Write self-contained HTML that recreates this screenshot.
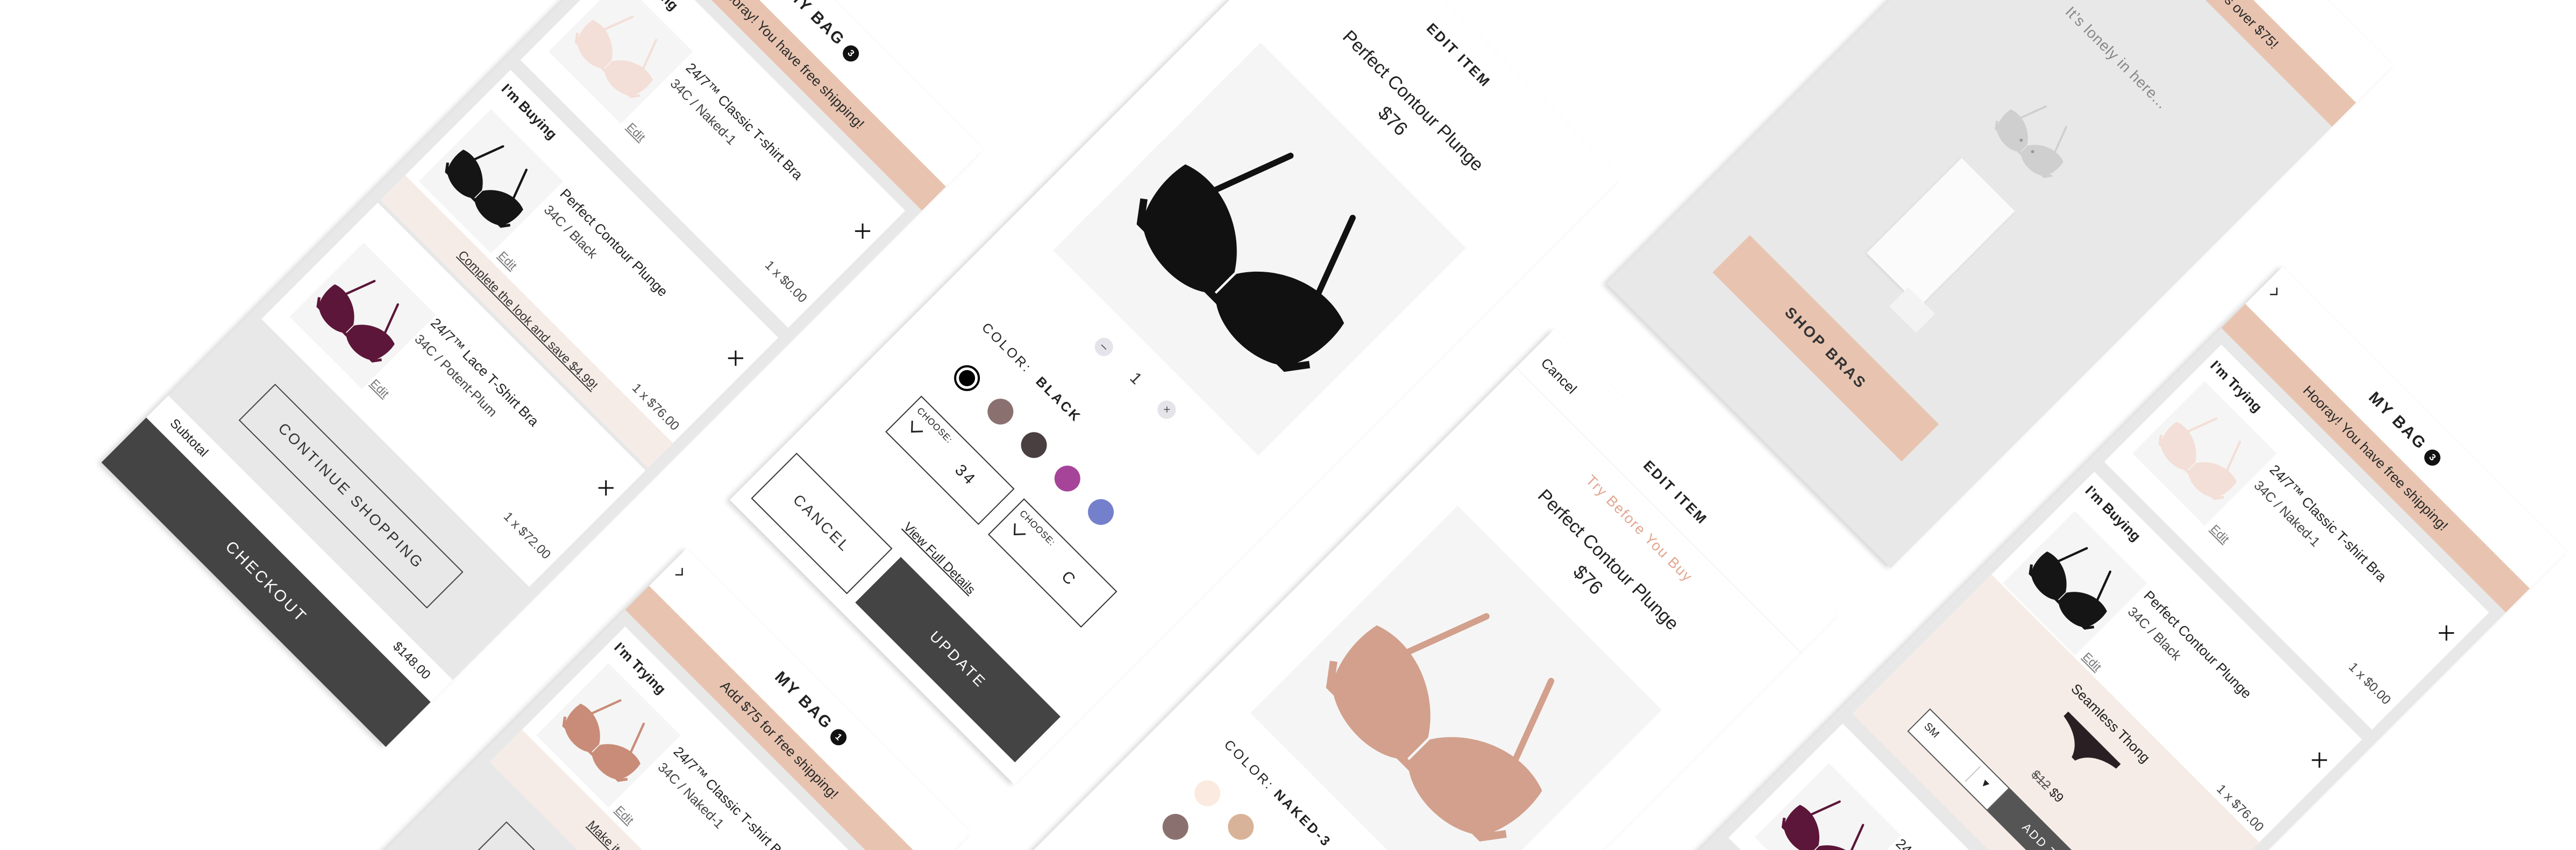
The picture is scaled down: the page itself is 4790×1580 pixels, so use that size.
<!DOCTYPE html>
<html><head><meta charset="utf-8">
<style>
html,body{margin:0;padding:0;width:4790px;height:1580px;overflow:hidden;}
body{background:#fff;font-family:"Liberation Sans",sans-serif;color:#222;}
#wrap{position:relative;width:4790px;height:1580px;overflow:hidden;contain:paint;}
.p{position:absolute;transform-origin:0 0;transform:rotate(45deg);box-shadow:-4px 6px 10px rgba(0,0,0,.16);overflow:hidden;}
.a{position:absolute;white-space:nowrap;}
.c{left:0;width:100%;text-align:center;}
.hd{font-weight:bold;font-size:30px;line-height:36px;letter-spacing:3px;}
.badge{display:inline-block;width:30px;height:30px;border-radius:50%;background:#111;color:#fff;font-size:17px;line-height:30px;text-align:center;letter-spacing:0;vertical-align:2px;margin-left:10px;}
.ban{background:#e8c4b0;font-size:26px;line-height:63px;text-align:center;color:#2a2a2a;}
.card{position:absolute;background:#fff;}
.sec{font-weight:bold;font-size:26px;line-height:30px;}
.t{font-size:26px;line-height:30px;color:#222;}
.s{font-size:25px;line-height:30px;color:#444;}
.e{font-size:22px;line-height:26px;color:#777;text-decoration:underline;}
.pr{font-size:24px;line-height:26px;color:#444;}
.im{position:absolute;background:#f5f5f5;}
.im svg{position:absolute;left:5%;top:10%;width:90%;height:80%;}
.x{position:absolute;width:26px;height:26px;}
.btn{position:absolute;text-align:center;letter-spacing:4px;font-size:28px;}
.sw{position:absolute;width:48px;height:48px;border-radius:50%;margin:-24px 0 0 -24px;}
</style></head><body>
<svg width="0" height="0" style="position:absolute">
<defs>
<symbol id="bra" viewBox="0 0 200 160">
<path d="M40,72 L64,8 M160,72 L136,8" stroke="currentColor" stroke-width="5" fill="none" stroke-linecap="round"/>
<path d="M8,74 C40,62 80,78 99,108 L99,132 C82,150 40,152 16,132 C6,114 4,92 8,74Z" fill="currentColor"/>
<path d="M192,74 C160,62 120,78 101,108 L101,132 C118,150 160,152 184,132 C194,114 196,92 192,74Z" fill="currentColor"/>
<path d="M4,118 L16,134 L184,134 L196,118" stroke="currentColor" stroke-width="6" fill="none"/>
</symbol>
<symbol id="thong" viewBox="0 0 200 100">
<path d="M8,18 L192,18 L192,34 C150,40 116,60 106,92 L94,92 C84,60 50,40 8,34Z" fill="currentColor"/>
</symbol>
<symbol id="xx" viewBox="0 0 26 26">
<path d="M3,3 L23,23 M23,3 L3,23" stroke="#111" stroke-width="3"/>
</symbol>
</defs></svg>
<div id="wrap">

<!-- Panel A -->
<div class="p" style="left:1300px;top:-252px;width:748px;height:1572px;background:#e8e8e8;">
 <div class="a" style="left:0;top:0;width:748px;height:99px;background:#fff"></div>
 <div class="a c hd" style="top:29px">MY BAG<span class="badge">3</span></div>
 <div class="a ban" style="left:0;top:99px;width:748px;height:63px">Hooray! You have free shipping!</div>
 <div class="card" style="left:22px;top:184px;width:704px;height:308px">
  <div class="a sec" style="left:13px;top:20px">I’m Trying</div>
  <div class="im" style="left:26px;top:70px;width:190px;height:190px"><svg style="color:#f3dfd7"><use href="#bra" width="100%" height="100%"/></svg></div>
  <div class="a t" style="left:228px;top:79px">24/7™ Classic T-shirt Bra</div>
  <div class="a s" style="left:228px;top:121px">34C / Naked-1</div>
  <div class="a e" style="left:228px;top:238px">Edit</div>
  <div class="a pr" style="right:14px;top:238px">1 x $0.00</div>
  <svg class="x" style="left:662px;top:70px"><use href="#xx"/></svg>
 </div>
 <div class="card" style="left:22px;top:518px;width:704px;height:342px">
  <div class="a" style="left:0;top:277px;width:704px;height:65px;background:#f6ece7"></div>
  <div class="a sec" style="left:13px;top:15px">I’m Buying</div>
  <div class="im" style="left:26px;top:77px;width:190px;height:190px"><svg style="color:#151515"><use href="#bra" width="100%" height="100%"/></svg></div>
  <div class="a t" style="left:228px;top:76px">Perfect Contour Plunge</div>
  <div class="a s" style="left:228px;top:119px">34C / Black</div>
  <div class="a e" style="left:228px;top:242px">Edit</div>
  <div class="a pr" style="right:14px;top:240px">1 x $76.00</div>
  <svg class="x" style="left:662px;top:70px"><use href="#xx"/></svg>
  <div class="a c" style="top:292px;font-size:23px;line-height:28px;text-decoration:underline;color:#333">Complete the look and save $4.99!</div>
 </div>
 <div class="card" style="left:22px;top:866px;width:704px;height:306px;border-top:1px solid #e2e2e2">
  <div class="im" style="left:34px;top:71px;width:190px;height:195px"><svg style="color:#5b1639"><use href="#bra" width="100%" height="100%"/></svg></div>
  <div class="a t" style="left:228px;top:67px">24/7™ Lace T-Shirt Bra</div>
  <div class="a s" style="left:228px;top:110px">34C / Potent-Plum</div>
  <div class="a e" style="left:228px;top:229px">Edit</div>
  <div class="a pr" style="right:14px;top:229px">1 x $72.00</div>
  <svg class="x" style="left:662px;top:62px"><use href="#xx"/></svg>
 </div>
 <div class="btn" style="left:125px;top:1240px;width:491px;height:92px;border:2px solid #444;line-height:92px;color:#333">CONTINUE SHOPPING</div>
 <div class="a" style="left:0;top:1396px;width:748px;height:58px;background:#fff"></div>
 <div class="a" style="left:39px;top:1396px;font-size:24px;line-height:58px">Subtotal</div>
 <div class="a" style="right:36px;top:1396px;font-size:24px;line-height:58px">$148.00</div>
 <div class="btn" style="left:0;top:1454px;width:748px;height:118px;background:#444;color:#fff;line-height:118px;font-size:30px">CHECKOUT</div>
</div>

<!-- Panel B -->
<div class="p" style="left:1277px;top:1019px;width:748px;height:1200px;background:#e8e8e8;">
 <div class="a" style="left:0;top:0;width:748px;height:99px;background:#fff"></div>
 <svg class="a" style="left:14px;top:28px" width="26" height="26"><path d="M6,4 L15,13 L6,22" stroke="#222" stroke-width="2.5" fill="none"/></svg>
 <div class="a c hd" style="top:29px">MY BAG<span class="badge">1</span></div>
 <div class="a ban" style="left:0;top:99px;width:748px;height:63px">Add $75 for free shipping!</div>
 <div class="card" style="left:22px;top:184px;width:704px;height:356px">
  <div class="a" style="left:0;top:271px;width:704px;height:85px;background:#f6ece7"></div>
  <div class="a sec" style="left:13px;top:20px">I’m Trying</div>
  <div class="im" style="left:26px;top:70px;width:190px;height:190px"><svg style="color:#c98c78"><use href="#bra" width="100%" height="100%"/></svg></div>
  <div class="a t" style="left:228px;top:79px">24/7™ Classic T-shirt Bra</div>
  <div class="a s" style="left:228px;top:121px">34C / Naked-1</div>
  <div class="a e" style="left:228px;top:236px">Edit</div>
  <div class="a pr" style="right:14px;top:236px">1 x $0.00</div>
  <svg class="x" style="left:662px;top:70px"><use href="#xx"/></svg>
  <div class="a c" style="top:290px;font-size:23px;line-height:28px;text-decoration:underline;color:#333">Make it a set and save $10!</div>
 </div>
 <div class="btn" style="left:122px;top:596px;width:494px;height:92px;border:2px solid #444;line-height:92px;color:#333">CONTINUE SHOPPING</div>
</div>

<!-- Panel E -->
<div class="p" style="left:2484px;top:-198px;width:748px;height:1594px;background:#fff;">
 <div class="a c" style="top:36px;font-weight:bold;font-size:26px;line-height:30px;letter-spacing:3px">EDIT ITEM</div>
 <div class="a c" style="top:151px;font-size:34px;line-height:40px">Perfect Contour Plunge</div>
 <div class="a c" style="top:203px;font-size:36px;line-height:42px">$76</div>
 <div class="im" style="left:97px;top:295px;width:540px;height:546px"><svg style="color:#111;left:8%;top:14%;width:84%;height:72%"><use href="#bra" width="100%" height="100%"/></svg></div>
 <div class="a" style="left:274px;top:884px;width:34px;height:34px;border-radius:50%;background:#e4e4ea;text-align:center;line-height:32px;font-size:22px;color:#444">–</div>
 <div class="a" style="left:366px;top:883px;font-size:30px;line-height:36px;color:#333">1</div>
 <div class="a" style="left:439px;top:884px;width:34px;height:34px;border-radius:50%;background:#e4e4ea;text-align:center;line-height:34px;font-size:20px;color:#444">×</div>
 <div class="a" style="left:105px;top:1015px;font-size:25px;line-height:30px;letter-spacing:4px">COLOR:</div>
 <div class="a" style="left:247px;top:1015px;font-size:25px;line-height:30px;letter-spacing:4px;font-weight:bold">BLACK</div>
 <div class="sw" style="left:152px;top:1122px;box-sizing:border-box;border:4px solid #000;background:#fff"><div style="position:absolute;left:5px;top:5px;width:30px;height:30px;border-radius:50%;background:#000"></div></div>
 <div class="sw" style="left:240px;top:1122px;background:#8a716f"></div>
 <div class="sw" style="left:328px;top:1122px;background:#4a3f40"></div>
 <div class="sw" style="left:416px;top:1122px;background:#a6449a"></div>
 <div class="sw" style="left:504px;top:1122px;background:#7580cc"></div>
 <div class="a" style="left:115px;top:1205px;width:241px;height:91px;border:2px solid #333">
  <div class="a" style="left:12px;top:10px;font-size:17px;letter-spacing:1px">CHOOSE:</div>
  <svg class="a" style="left:16px;top:40px" width="34" height="22"><path d="M3,3 L17,18 L31,3" stroke="#222" stroke-width="3" fill="none"/></svg>
  <div class="a" style="left:140px;top:28px;font-size:30px;letter-spacing:4px">34</div>
 </div>
 <div class="a" style="left:385px;top:1205px;width:241px;height:91px;border:2px solid #333">
  <div class="a" style="left:12px;top:10px;font-size:17px;letter-spacing:1px">CHOOSE:</div>
  <svg class="a" style="left:16px;top:40px" width="34" height="22"><path d="M3,3 L17,18 L31,3" stroke="#222" stroke-width="3" fill="none"/></svg>
  <div class="a" style="left:150px;top:28px;font-size:30px;letter-spacing:4px">C</div>
 </div>
 <div class="a" style="left:264px;top:1382px;font-size:24px;line-height:28px;text-decoration:underline">View Full Details</div>
 <div class="btn" style="left:26px;top:1444px;width:248px;height:116px;border:2px solid #333;line-height:116px;color:#333">CANCEL</div>
 <div class="btn" style="left:300px;top:1444px;width:420px;height:120px;background:#444;color:#fff;line-height:120px">UPDATE</div>
</div>

<!-- Panel C -->
<div class="p" style="left:2890px;top:612px;width:748px;height:1400px;background:#fff;">
 <div class="a" style="left:0;top:100px;width:748px;height:1px;background:#ececec"></div>
 <div class="a" style="left:27px;top:40px;font-size:26px;line-height:30px">Cancel</div>
 <div class="a c" style="top:40px;font-weight:bold;font-size:26px;line-height:30px;letter-spacing:3px">EDIT ITEM</div>
 <div class="a c" style="top:134px;font-size:27px;line-height:32px;letter-spacing:2px;color:#e2a68f">Try Before You Buy</div>
 <div class="a c" style="top:212px;font-size:34px;line-height:40px">Perfect Contour Plunge</div>
 <div class="a c" style="top:264px;font-size:36px;line-height:42px">$76</div>
 <div class="im" style="left:105px;top:359px;width:537px;height:545px"><svg style="color:#d2a08c;left:6%;top:14%;width:88%;height:74%"><use href="#bra" width="100%" height="100%"/></svg></div>
 <div class="a" style="left:112px;top:959px;font-size:25px;line-height:30px;letter-spacing:4px">COLOR: <b>NAKED-3</b></div>
 <div class="sw" style="left:154px;top:1066px;background:#fbeadf"></div>
 <div class="sw" style="left:242px;top:1066px;background:#d8b399"></div>
 <div class="sw" style="left:156px;top:1152px;background:#8a716f"></div>
</div>

<!-- Panel D -->
<div class="p" style="left:3922px;top:-408px;width:748px;height:1322px;background:#e8e8e8;">
 <div class="a" style="left:0;top:0;width:748px;height:99px;background:#fff"></div>
 <div class="a ban" style="left:0;top:99px;width:748px;height:63px">Free shipping on orders over $75!</div>
 <div class="a c" style="top:338px;font-size:28px;line-height:34px;color:#888;letter-spacing:1px">It’s lonely in here...</div>
 <svg class="a" style="left:292px;top:506px" width="160" height="120" viewBox="0 0 200 160"><g style="color:#cfcfcf"><use href="#bra" width="200" height="160"/></g><circle cx="80" cy="110" r="4" fill="#999"/><circle cx="120" cy="110" r="4" fill="#999"/></svg>
 <div class="a" style="left:302px;top:690px;width:140px;height:250px;background:#fbfbfb;box-shadow:0 2px 6px rgba(0,0,0,.08)"></div>
 <div class="a" style="left:402px;top:930px;width:70px;height:50px;background:#f3f3f3"></div>
 <div class="btn" style="left:125px;top:1070px;width:497px;height:98px;background:#e8c4b0;line-height:98px;font-weight:bold;color:#333">SHOP BRAS</div>
</div>

<!-- Panel F -->
<div class="p" style="left:4245px;top:495px;width:748px;height:1600px;background:#e8e8e8;">
 <div class="a" style="left:0;top:0;width:748px;height:99px;background:#fff"></div>
 <svg class="a" style="left:14px;top:32px" width="26" height="26"><path d="M6,4 L15,13 L6,22" stroke="#222" stroke-width="2.5" fill="none"/></svg>
 <div class="a c hd" style="top:35px">MY BAG<span class="badge">3</span></div>
 <div class="a ban" style="left:0;top:99px;width:748px;height:63px">Hooray! You have free shipping!</div>
 <div class="card" style="left:22px;top:184px;width:704px;height:308px">
  <div class="a sec" style="left:13px;top:20px">I’m Trying</div>
  <div class="im" style="left:26px;top:70px;width:190px;height:190px"><svg style="color:#f3dfd7"><use href="#bra" width="100%" height="100%"/></svg></div>
  <div class="a t" style="left:228px;top:79px">24/7™ Classic T-shirt Bra</div>
  <div class="a s" style="left:228px;top:121px">34C / Naked-1</div>
  <div class="a e" style="left:228px;top:238px">Edit</div>
  <div class="a pr" style="right:14px;top:238px">1 x $0.00</div>
  <svg class="x" style="left:662px;top:70px"><use href="#xx"/></svg>
 </div>
 <div class="card" style="left:22px;top:518px;width:704px;height:636px">
  <div class="a" style="left:0;top:270px;width:704px;height:366px;background:#f6ece7"></div>
  <div class="a sec" style="left:13px;top:15px">I’m Buying</div>
  <div class="im" style="left:26px;top:77px;width:190px;height:190px"><svg style="color:#151515"><use href="#bra" width="100%" height="100%"/></svg></div>
  <div class="a t" style="left:228px;top:76px">Perfect Contour Plunge</div>
  <div class="a s" style="left:228px;top:119px">34C / Black</div>
  <div class="a e" style="left:228px;top:240px">Edit</div>
  <div class="a pr" style="right:14px;top:238px">1 x $76.00</div>
  <svg class="x" style="left:662px;top:70px"><use href="#xx"/></svg>
  <div class="a c" style="top:294px;font-size:26px;line-height:30px">Seamless Thong</div>
  <svg class="a" style="left:275px;top:336px" width="150" height="75"><g style="color:#2a1f22"><use href="#thong" width="150" height="75"/></g></svg>
  <div class="a c" style="top:462px;font-size:24px;line-height:28px"><s style="color:#555">$12</s> $9</div>
  <div class="a" style="left:95px;top:527px;width:206px;height:56px;border:2px solid #555;background:#fff">
   <div class="a" style="left:14px;top:14px;font-size:20px">SM</div>
   <div class="a" style="left:140px;top:8px;width:1px;height:40px;background:#999"></div>
   <div class="a" style="left:160px;top:14px;font-size:20px">▼</div>
  </div>
  <div class="btn" style="left:305px;top:527px;width:300px;height:60px;background:#555;color:#fff;line-height:60px;font-size:22px;letter-spacing:3px">ADD TO BAG</div>
 </div>
 <div class="card" style="left:22px;top:1180px;width:704px;height:300px">
  <div class="im" style="left:34px;top:70px;width:190px;height:195px"><svg style="color:#5b1639"><use href="#bra" width="100%" height="100%"/></svg></div>
  <div class="a t" style="left:228px;top:66px">24/7™ Lace T-Shirt Bra</div>
  <div class="a s" style="left:228px;top:109px">34C / Potent-Plum</div>
 </div>
</div>

</div>
</body></html>
